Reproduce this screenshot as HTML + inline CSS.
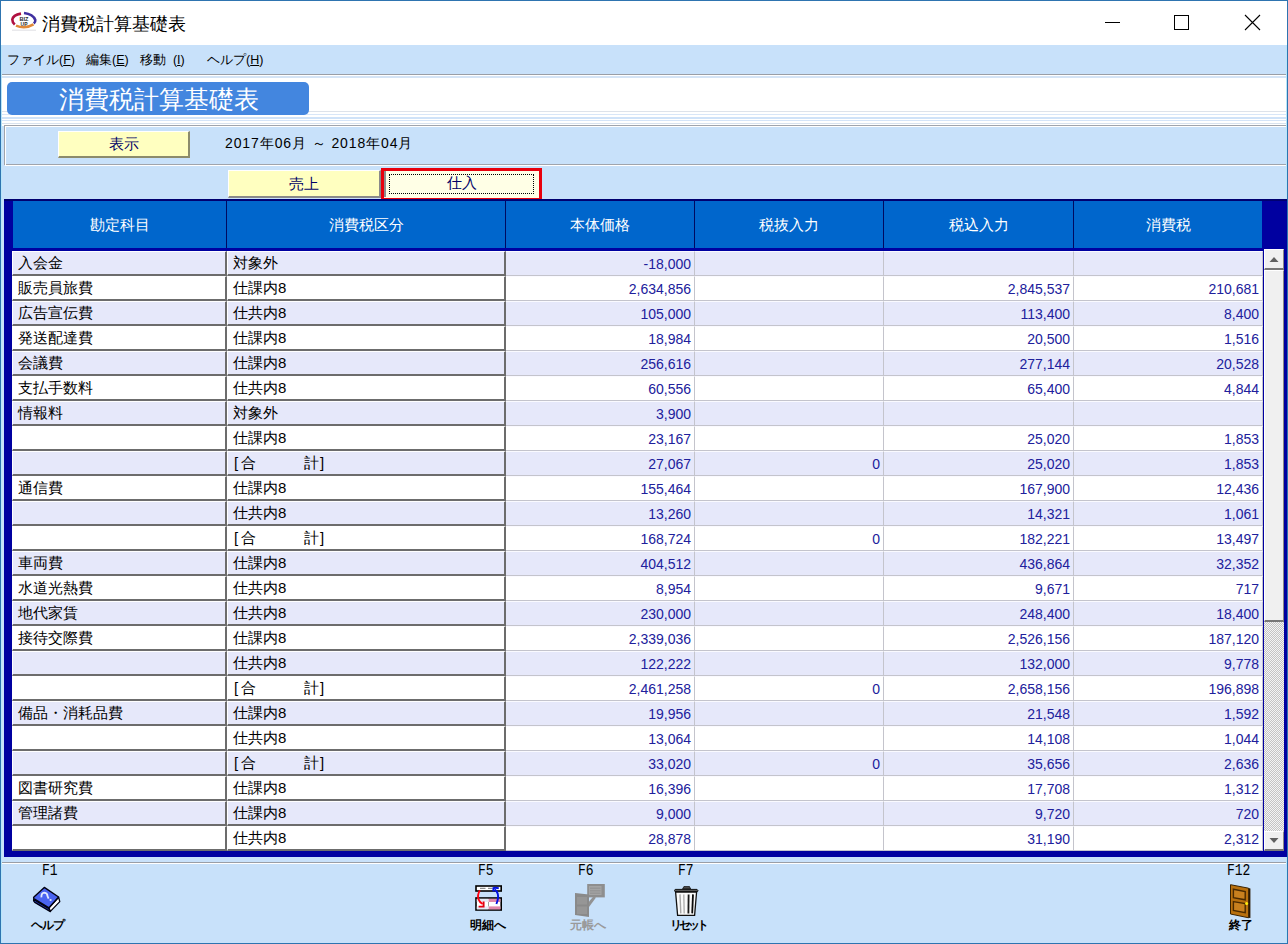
<!DOCTYPE html>
<html><head><meta charset="utf-8">
<style>
*{box-sizing:border-box;margin:0;padding:0}
html,body{width:1288px;height:944px;overflow:hidden}
body{position:relative;background:#c8e1fa;font-family:"Liberation Sans",sans-serif;color:#000}
.abs{position:absolute}
#frame{position:absolute;left:0;top:0;width:1288px;height:944px;border:1px solid #2e74b0;pointer-events:none}
#titlebar{position:absolute;left:1px;top:1px;width:1286px;height:44px;background:#fff}
#title{position:absolute;left:42px;top:13px;font-size:18px;line-height:22px;white-space:nowrap;color:#000}
#menubar{position:absolute;left:1px;top:45px;width:1286px;height:29px;background:#c8e1fa}
.menu{position:absolute;top:52px;font-size:12.5px;line-height:16px;white-space:nowrap}
#hdrzone{position:absolute;left:1px;top:74px;width:1286px;height:52px;background:#fff}
.hl{position:absolute;left:1px;width:1286px;height:1px}
#bluepanel{position:absolute;left:7px;top:82px;width:302px;height:33px;background:#4386df;border-radius:5px}
#bluetitle{position:absolute;left:59px;top:83px;font-size:25px;line-height:32px;color:#fff;white-space:nowrap}
#filterbox{position:absolute;left:4px;top:125px;width:1283px;height:40px;border-top:1px solid #a0a4ac;border-left:1px solid #a0a4ac;border-bottom:1px solid #a0a4ac}
#filterbox:after{content:"";position:absolute;left:0;top:0;right:0;bottom:-2px;border-top:1px solid #fff;border-left:1px solid #fff;border-bottom:1px solid #fff}
.ybtn{position:absolute;background:#ffffc0;border-top:1px solid #fff;border-left:1px solid #fff;border-right:2px solid #8c8c6c;border-bottom:2px solid #8c8c6c;color:#000066;text-align:center;white-space:nowrap}
#date{position:absolute;left:225px;top:135px;font-size:14px;line-height:16px;white-space:nowrap;letter-spacing:0.9px}
/* table */
#tframe{position:absolute;left:4px;top:199px;width:1283px;height:658px;background:#0000a0;border-top:2px solid #000070}
#thead{position:absolute;left:13px;top:201px;width:1249px;height:47px;background:#0066cc}
.hsep{position:absolute;top:201px;width:1px;height:47px;background:#000a60}
.htxt{position:absolute;top:216px;font-size:15px;line-height:17px;color:#fff;white-space:nowrap;text-align:center}
.row{position:absolute;left:12px;width:1251px;height:25px}
.lav{background:#e6e8fa}
.wht{background:#fff}
.c0,.c1{position:absolute;top:0;height:25px;border-top:1px solid #fff;border-left:1px solid #fff;border-right:2px solid #6c6c6c;border-bottom:2px solid #6c6c6c}
.c0{left:0;width:215px}
.c1{left:215px;width:279px}
.t0,.t1{position:absolute;left:5px;top:2px;font-size:15px;line-height:17px;white-space:nowrap}
.n{position:absolute;top:0;height:25px;border-top:1px solid #fafaff;border-right:1px solid #c4c4cc;border-bottom:1px solid #c4c4cc;text-align:right;padding-right:3px;font-size:14px;line-height:25px;color:#20209c;white-space:nowrap}
.n2{left:494px;width:189px}
.n3{left:683px;width:189px}
.n4{left:872px;width:190px}
.n5{left:1062px;width:189px}
.sb,.sg,.sk,.se{position:absolute;top:2px;font-size:15px;line-height:17px}
.sb{left:6px}.sg{left:13px}.sk{left:76px}.se{left:92px}
/* scrollbar */
.sbtn{position:absolute;left:1264px;width:20px;background:#f0f0f0;border-top:1px solid #fff;border-left:1px solid #fff;border-right:1px solid #888;border-bottom:2px solid #777}
#track{position:absolute;left:1264px;top:622px;width:20px;height:209px;background:repeating-conic-gradient(#c4c4c4 0 25%,#f4f4f4 0 50%) 0 0/2px 2px}
/* toolbar */
.fk{position:absolute;top:862px;font-family:'Liberation Mono',monospace;font-size:13px;line-height:14px;white-space:nowrap;transform:scaleY(1.3);transform-origin:0 0}
.lbl{position:absolute;top:918px;font-size:12px;line-height:14px;font-weight:bold;white-space:nowrap}
</style></head><body>
<div id="titlebar"></div>
<!-- logo -->
<svg class="abs" style="left:0;top:0" width="40" height="34" viewBox="0 0 40 34">
 <path d="M21 13.6 Q13 15 12.3 19.5 Q12.3 22.5 14.8 24.6" stroke="#b01040" stroke-width="2.6" fill="none"/>
 <path d="M24 13 Q33 14 35.3 20 Q35.6 22 33.8 23.5" stroke="#4030a0" stroke-width="2.6" fill="none"/>
 <path d="M16 25.6 Q25 29.5 33.5 24.4" stroke="#e08838" stroke-width="2.6" fill="none"/>
 <text x="24" y="21.3" font-size="5.6" font-weight="bold" text-anchor="middle" fill="#2a2a2a" font-family="Liberation Sans">BIZ</text>
 <text x="24" y="25.8" font-size="5" font-weight="bold" text-anchor="middle" fill="#2a2a2a" font-family="Liberation Sans">UP</text>
 <rect x="12" y="29.8" width="24" height="0.6" fill="#c8c8d0"/>
</svg>
<div id="title">消費税計算基礎表</div>
<!-- window controls -->
<div class="abs" style="left:1105px;top:22px;width:15px;height:1px;background:#000"></div>
<div class="abs" style="left:1174px;top:15px;width:15px;height:15px;border:1px solid #000"></div>
<svg class="abs" style="left:1244px;top:14px" width="17" height="17" viewBox="0 0 17 17"><path d="M1 1L16 16M16 1L1 16" stroke="#000" stroke-width="1.1"/></svg>

<div id="menubar"></div>
<div class="menu" style="left:7px">ファイル(<u>F</u>)</div>
<div class="menu" style="left:86px">編集(<u>E</u>)</div>
<div class="menu" style="left:140px">移動 &nbsp;(<u>I</u>)</div>
<div class="menu" style="left:207px">ヘルプ(<u>H</u>)</div>

<div id="hdrzone"></div>
<div class="hl" style="top:74px;background:#9a9ea6"></div>
<div class="hl" style="top:76px;height:2px;background:#d4e4f6"></div>
<div class="hl" style="top:111px;background:#dde2ea"></div>
<div class="hl" style="top:114px;background:#d8e6f8"></div>
<div class="hl" style="top:117px;height:2px;background:#cfe2f8"></div>
<div class="hl" style="top:120px;background:#d4e4f8"></div>
<div class="hl" style="top:123px;background:#d8e2ee"></div>
<div id="bluepanel"></div>
<div id="bluetitle">消費税計算基礎表</div>

<div class="abs" style="left:1px;top:126px;width:1286px;height:73px;background:#c8e1fa"></div>
<div id="filterbox"></div>
<div class="ybtn" style="left:58px;top:131px;width:132px;height:27px;font-size:15px;line-height:24px">表示</div>
<div id="date">2017年06月 ～ 2018年04月</div>

<!-- tabs -->
<div class="ybtn" style="left:228px;top:170px;width:153px;height:28px;font-size:15px;line-height:25px;border-right-color:#8a8a8a;border-bottom-color:#8a8a8a">売上</div>
<div class="abs" style="left:381px;top:168px;width:161px;height:33px;border:3px solid #e8000c;background:#ffffe6"></div>
<div class="abs" style="left:384px;top:171px;width:2px;height:26px;background:#8c8c8c"></div>
<div class="abs" style="left:389px;top:174px;width:145px;height:20px;border:1px dotted #000"></div>
<div class="abs" style="left:381px;top:173px;width:161px;text-align:center;font-size:15px;line-height:20px;color:#000066">仕入</div>

<!-- table -->
<div id="tframe"></div>
<div id="thead"></div>
<div class="hsep" style="left:226px"></div>
<div class="hsep" style="left:505px"></div>
<div class="hsep" style="left:694px"></div>
<div class="hsep" style="left:883px"></div>
<div class="hsep" style="left:1073px"></div>
<div class="htxt" style="left:13px;width:213px">勘定科目</div>
<div class="htxt" style="left:227px;width:278px">消費税区分</div>
<div class="htxt" style="left:506px;width:188px">本体価格</div>
<div class="htxt" style="left:695px;width:188px">税抜入力</div>
<div class="htxt" style="left:884px;width:189px">税込入力</div>
<div class="htxt" style="left:1074px;width:188px">消費税</div>
<div class="row lav" style="top:251px"><div class="c0"><span class="t0">入会金</span></div><div class="c1"><span class="t1">対象外</span></div><div class="n n2">-18,000</div><div class="n n3"></div><div class="n n4"></div><div class="n n5"></div></div>
<div class="row wht" style="top:276px"><div class="c0"><span class="t0">販売員旅費</span></div><div class="c1"><span class="t1">仕課内8</span></div><div class="n n2">2,634,856</div><div class="n n3"></div><div class="n n4">2,845,537</div><div class="n n5">210,681</div></div>
<div class="row lav" style="top:301px"><div class="c0"><span class="t0">広告宣伝費</span></div><div class="c1"><span class="t1">仕共内8</span></div><div class="n n2">105,000</div><div class="n n3"></div><div class="n n4">113,400</div><div class="n n5">8,400</div></div>
<div class="row wht" style="top:326px"><div class="c0"><span class="t0">発送配達費</span></div><div class="c1"><span class="t1">仕課内8</span></div><div class="n n2">18,984</div><div class="n n3"></div><div class="n n4">20,500</div><div class="n n5">1,516</div></div>
<div class="row lav" style="top:351px"><div class="c0"><span class="t0">会議費</span></div><div class="c1"><span class="t1">仕課内8</span></div><div class="n n2">256,616</div><div class="n n3"></div><div class="n n4">277,144</div><div class="n n5">20,528</div></div>
<div class="row wht" style="top:376px"><div class="c0"><span class="t0">支払手数料</span></div><div class="c1"><span class="t1">仕共内8</span></div><div class="n n2">60,556</div><div class="n n3"></div><div class="n n4">65,400</div><div class="n n5">4,844</div></div>
<div class="row lav" style="top:401px"><div class="c0"><span class="t0">情報料</span></div><div class="c1"><span class="t1">対象外</span></div><div class="n n2">3,900</div><div class="n n3"></div><div class="n n4"></div><div class="n n5"></div></div>
<div class="row wht" style="top:426px"><div class="c0"><span class="t0"></span></div><div class="c1"><span class="t1">仕課内8</span></div><div class="n n2">23,167</div><div class="n n3"></div><div class="n n4">25,020</div><div class="n n5">1,853</div></div>
<div class="row lav" style="top:451px"><div class="c0"><span class="t0"></span></div><div class="c1"><span class="sb">[</span><span class="sg">合</span><span class="sk">計</span><span class="se">]</span></div><div class="n n2">27,067</div><div class="n n3">0</div><div class="n n4">25,020</div><div class="n n5">1,853</div></div>
<div class="row wht" style="top:476px"><div class="c0"><span class="t0">通信費</span></div><div class="c1"><span class="t1">仕課内8</span></div><div class="n n2">155,464</div><div class="n n3"></div><div class="n n4">167,900</div><div class="n n5">12,436</div></div>
<div class="row lav" style="top:501px"><div class="c0"><span class="t0"></span></div><div class="c1"><span class="t1">仕共内8</span></div><div class="n n2">13,260</div><div class="n n3"></div><div class="n n4">14,321</div><div class="n n5">1,061</div></div>
<div class="row wht" style="top:526px"><div class="c0"><span class="t0"></span></div><div class="c1"><span class="sb">[</span><span class="sg">合</span><span class="sk">計</span><span class="se">]</span></div><div class="n n2">168,724</div><div class="n n3">0</div><div class="n n4">182,221</div><div class="n n5">13,497</div></div>
<div class="row lav" style="top:551px"><div class="c0"><span class="t0">車両費</span></div><div class="c1"><span class="t1">仕課内8</span></div><div class="n n2">404,512</div><div class="n n3"></div><div class="n n4">436,864</div><div class="n n5">32,352</div></div>
<div class="row wht" style="top:576px"><div class="c0"><span class="t0">水道光熱費</span></div><div class="c1"><span class="t1">仕共内8</span></div><div class="n n2">8,954</div><div class="n n3"></div><div class="n n4">9,671</div><div class="n n5">717</div></div>
<div class="row lav" style="top:601px"><div class="c0"><span class="t0">地代家賃</span></div><div class="c1"><span class="t1">仕共内8</span></div><div class="n n2">230,000</div><div class="n n3"></div><div class="n n4">248,400</div><div class="n n5">18,400</div></div>
<div class="row wht" style="top:626px"><div class="c0"><span class="t0">接待交際費</span></div><div class="c1"><span class="t1">仕課内8</span></div><div class="n n2">2,339,036</div><div class="n n3"></div><div class="n n4">2,526,156</div><div class="n n5">187,120</div></div>
<div class="row lav" style="top:651px"><div class="c0"><span class="t0"></span></div><div class="c1"><span class="t1">仕共内8</span></div><div class="n n2">122,222</div><div class="n n3"></div><div class="n n4">132,000</div><div class="n n5">9,778</div></div>
<div class="row wht" style="top:676px"><div class="c0"><span class="t0"></span></div><div class="c1"><span class="sb">[</span><span class="sg">合</span><span class="sk">計</span><span class="se">]</span></div><div class="n n2">2,461,258</div><div class="n n3">0</div><div class="n n4">2,658,156</div><div class="n n5">196,898</div></div>
<div class="row lav" style="top:701px"><div class="c0"><span class="t0">備品・消耗品費</span></div><div class="c1"><span class="t1">仕課内8</span></div><div class="n n2">19,956</div><div class="n n3"></div><div class="n n4">21,548</div><div class="n n5">1,592</div></div>
<div class="row wht" style="top:726px"><div class="c0"><span class="t0"></span></div><div class="c1"><span class="t1">仕共内8</span></div><div class="n n2">13,064</div><div class="n n3"></div><div class="n n4">14,108</div><div class="n n5">1,044</div></div>
<div class="row lav" style="top:751px"><div class="c0"><span class="t0"></span></div><div class="c1"><span class="sb">[</span><span class="sg">合</span><span class="sk">計</span><span class="se">]</span></div><div class="n n2">33,020</div><div class="n n3">0</div><div class="n n4">35,656</div><div class="n n5">2,636</div></div>
<div class="row wht" style="top:776px"><div class="c0"><span class="t0">図書研究費</span></div><div class="c1"><span class="t1">仕課内8</span></div><div class="n n2">16,396</div><div class="n n3"></div><div class="n n4">17,708</div><div class="n n5">1,312</div></div>
<div class="row lav" style="top:801px"><div class="c0"><span class="t0">管理諸費</span></div><div class="c1"><span class="t1">仕課内8</span></div><div class="n n2">9,000</div><div class="n n3"></div><div class="n n4">9,720</div><div class="n n5">720</div></div>
<div class="row wht" style="top:826px"><div class="c0"><span class="t0"></span></div><div class="c1"><span class="t1">仕共内8</span></div><div class="n n2">28,878</div><div class="n n3"></div><div class="n n4">31,190</div><div class="n n5">2,312</div></div>
<!-- scrollbar -->
<div class="sbtn" style="top:249px;height:21px"></div>
<svg class="abs" style="left:1268px;top:255px" width="12" height="8"><path d="M1.5 7L6 2L10.5 7Z" fill="#606060"/></svg>
<div class="sbtn" style="top:270px;height:352px"></div>
<div id="track"></div>
<div class="sbtn" style="top:831px;height:20px"></div>
<svg class="abs" style="left:1268px;top:837px" width="12" height="8"><path d="M1.5 1L6 6L10.5 1Z" fill="#606060"/></svg>

<!-- toolbar -->
<div class="hl" style="top:862px;background:#9a9ea6"></div>
<div class="hl" style="top:863px;background:#fff"></div>
<div class="fk" style="left:42px">F1</div>
<div class="fk" style="left:478px">F5</div>
<div class="fk" style="left:578px">F6</div>
<div class="fk" style="left:678px">F7</div>
<div class="fk" style="left:1227px">F12</div>

<!-- help book icon -->
<svg class="abs" style="left:32px;top:886px" width="30" height="28" viewBox="0 0 30 28">
 <path d="M1.6 13.5 L17 22.6 L18.4 25.6 L2.8 16.4 Q1 15.2 1.6 13.5 Z" fill="#2a40d8" stroke="#000010" stroke-width="1.3" stroke-linejoin="round"/>
 <path d="M17 21.8 L26.6 11.2 L27.8 15.6 L18.4 25.4 Z" fill="#fff" stroke="#000010" stroke-width="1.3" stroke-linejoin="round"/>
 <path d="M12.3 1.4 L26.6 11 L17 21.8 L2.2 12.8 Q1 12 2.2 10.8 Z" fill="#4a64f0" stroke="#000010" stroke-width="1.4" stroke-linejoin="round"/>
 <path d="M9.4 11.4 Q9.2 6.8 12.3 6.6 Q15.4 6.8 15.6 10.4 L16.6 12.6" stroke="#e4ecff" stroke-width="1.8" fill="none"/>
 <circle cx="18.6" cy="14" r="1.1" fill="#e4ecff"/>
</svg>
<div class="lbl" style="left:31px;letter-spacing:-1px">ヘルプ</div>

<!-- F5 icon -->
<svg class="abs" style="left:474px;top:884px" width="29" height="28" viewBox="0 0 29 28">
 <rect x="2" y="2" width="25.2" height="5" fill="#fff" stroke="#000" stroke-width="1.6"/>
 <path d="M6 4.4h5.5M14 4.4h4.5" stroke="#909090" stroke-width="1.2"/>
 <rect x="2" y="14" width="25.2" height="12" fill="#fff" stroke="#000" stroke-width="1.6"/>
 <rect x="2.8" y="14.8" width="11.6" height="3.2" fill="#e4eaf6"/>
 <rect x="14.6" y="14.8" width="11.8" height="3.2" fill="#e088aa"/>
 <rect x="2.8" y="22.4" width="11.6" height="3" fill="#e4eaf6"/>
 <rect x="14.6" y="22.4" width="11.8" height="3" fill="#e088aa"/>
 <path d="M14.5 18v4.4" stroke="#a0a0a0" stroke-width="1"/>
 <path d="M5.8 6.4 Q3.2 11 4.4 15 Q5.6 18.5 8.6 20" stroke="#ff0010" stroke-width="1.9" fill="none"/>
 <path d="M4.6 22.6 H9.6 V17.6" stroke="#e00010" stroke-width="1.9" fill="none"/>
 <path d="M22.4 20 Q24.8 14 23.8 10 Q23 7 20.6 5.4" stroke="#0010e0" stroke-width="1.9" fill="none"/>
 <path d="M18.6 4.6 Q21 3 24.8 4.4 M19.4 3.4 V7.4" stroke="#0010e0" stroke-width="1.9" fill="none"/>
</svg>
<div class="lbl" style="left:470px">明細へ</div>

<!-- F6 icon (disabled) -->
<svg class="abs" style="left:574px;top:883px" width="32" height="35" viewBox="0 0 32 35">
 <rect x="13.2" y="1" width="17.6" height="13.4" fill="#8e8e8e"/>
 <rect x="15" y="3" width="12.5" height="9" fill="#a4a4a4"/>
 <path d="M16 5.2h10.5M16 7.8h10.5M16 10.2h10.5" stroke="#8a8a8a" stroke-width="0.8"/>
 <path d="M1 10 L15 11.6 L15 34 L1 32 Z" fill="#8a8a8a"/>
 <rect x="3" y="14" width="10" height="7.5" fill="#969696"/>
 <rect x="3" y="23.5" width="10" height="7.5" fill="#969696"/>
 <path d="M15 24 L22 14.4 L19.4 13.6 L15 18.5 Z" fill="#929292"/>
</svg>
<div class="lbl" style="left:570px;color:#9a9a9a">元帳へ</div>

<!-- F7 trash -->
<svg class="abs" style="left:674px;top:886px" width="25" height="31" viewBox="0 0 25 31">
 <path d="M8.6 3 L10 0.4 H15.4 L16.6 3 Z" fill="#4a4a4a" stroke="#111" stroke-width="0.8"/>
 <path d="M1.2 3.4 H23 Q24.6 4.2 23.6 5.6 H1 Q-0.2 4.4 1.2 3.4 Z" fill="#5a5a5a" stroke="#111" stroke-width="1"/>
 <path d="M1.6 6 L3.6 29.4 H20.6 L22.6 6 Z" fill="#fafafa" stroke="#111" stroke-width="1.3"/>
 <path d="M6 8.4 L6.8 27.4" stroke="#a8a8a8" stroke-width="1.4"/>
 <path d="M9.8 8.4 L10.2 27.4" stroke="#b0b0b0" stroke-width="1.4"/>
 <path d="M14.6 8.4 L14.4 27.4" stroke="#1a1a1a" stroke-width="1.8"/>
 <path d="M19 8.4 L18.2 27.4" stroke="#0a0a0a" stroke-width="1.8"/>
</svg>
<div class="lbl" style="left:670px;letter-spacing:-3px">リセット</div>

<!-- F12 door -->
<svg class="abs" style="left:1230px;top:884px" width="22" height="35" viewBox="0 0 22 35">
 <path d="M18.4 4 L20.4 4.6 L20.4 34 L18.4 33.8 Z" fill="#2a1800"/>
 <path d="M0.5 0.7 L18.6 4.2 L18.6 33.8 L0.5 30 Z" fill="#b8700e" stroke="#3a2200" stroke-width="1"/>
 <path d="M3.4 5.2 L15.2 7.6 L15.2 15.8 L3.4 13.6 Z" fill="#c8801e" stroke="#4a2a00" stroke-width="1.4"/>
 <path d="M3.4 17.6 L15.2 19.6 L15.2 28.6 L3.4 26.4 Z" fill="#c8801e" stroke="#4a2a00" stroke-width="1.4"/>
 <circle cx="16.6" cy="19.4" r="1.5" fill="#ffee10"/>
</svg>
<div class="lbl" style="left:1229px">終了</div>

<div class="abs" style="left:1px;top:45px;width:1px;height:898px;background:#b8e6fa"></div>
<div class="abs" style="left:1286px;top:45px;width:1px;height:154px;background:#b8e6fa"></div>
<div class="abs" style="left:1286px;top:857px;width:1px;height:86px;background:#b8e6fa"></div>
<div id="frame"></div>
</body></html>
